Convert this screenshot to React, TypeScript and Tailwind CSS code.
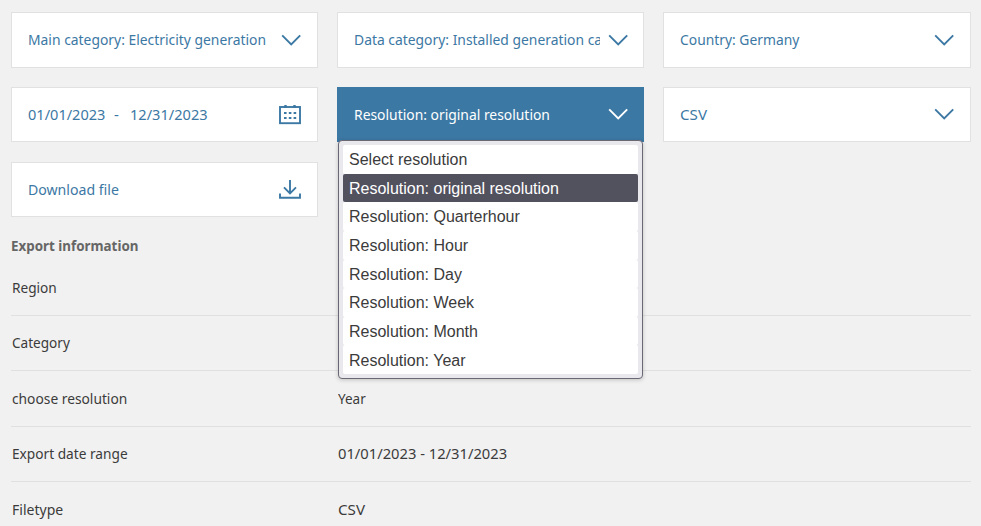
import React from "react";

const label = "inline-block origin-left whitespace-nowrap";

function Chevron({ className = "" }: { className?: string }) {
  return (
    <svg width="20" height="12" viewBox="0 0 20 12" fill="none" stroke="currentColor" strokeWidth="1.9" className={`shrink-0 ${className}`}>
      <path d="M1.2 1.3 10.2 10.3 19.2 1.3" />
    </svg>
  );
}

function Calendar() {
  return (
    <svg width="22" height="20" viewBox="0 0 22 20" className="shrink-0">
      <rect x="1" y="2" width="20" height="16.2" fill="none" stroke="currentColor" strokeWidth="1.9" />
      <path d="M6.5 0v3M15.5 0v3" stroke="currentColor" strokeWidth="2.4" />
      <path d="M5 8h2.6M9.8 8h2.6M14.6 8h2.6M5 13h2.6M9.8 13h2.6M14.6 13h2.6" stroke="currentColor" strokeWidth="2" />
    </svg>
  );
}

function Download() {
  return (
    <svg width="22" height="19" viewBox="0 0 22 19" fill="none" stroke="currentColor" strokeWidth="1.9" className="shrink-0">
      <path d="M11 0v13.2M5 7.4l6 6 6-6" />
      <path d="M1 13.5v4.2h20v-4.2" />
    </svg>
  );
}

function Card({ children, icon, active = false }: { children: React.ReactNode; icon: React.ReactNode; active?: boolean }) {
  return (
    <div
      className={
        active
          ? "flex items-center justify-between border border-[#3c78a4] bg-[#3c78a4] px-4 text-white"
          : "flex items-center justify-between border border-[#e1e1e1] bg-white px-4 text-[#3c78a4]"
      }
    >
      <div className="flex min-w-0 flex-1 pb-0.5">{children}</div>
      {icon}
    </div>
  );
}

const options = [
  "Select resolution",
  "Resolution: original resolution",
  "Resolution: Quarterhour",
  "Resolution: Hour",
  "Resolution: Day",
  "Resolution: Week",
  "Resolution: Month",
  "Resolution: Year",
];

function Menu() {
  return (
    <ul className="absolute left-[338px] top-[140px] h-[239px] w-[305px] rounded-[4px] border border-[#6b6875] bg-[#e9e9ed] p-1 font-['Liberation_Sans',Arial,sans-serif] text-[16px] text-[#3b3b3b] shadow-[0_1px_4px_rgba(0,0,0,0.2)]">
      {options.map((o, i) => (
        <li
          key={o}
          className={
            i === 1
              ? "flex h-[28.65px] items-center rounded-[2px] bg-[#52515e] px-1.5 pt-[1.45px] text-white"
              : "flex h-[28.65px] items-center rounded-[2px] bg-white px-1.5 pt-[1.45px]"
          }
        >
          {o}
        </li>
      ))}
    </ul>
  );
}

const rows = [
  { name: "Region", scale: "scale-x-[0.91]", value: "", valueScale: "", height: "h-[55px]" },
  { name: "Category", scale: "scale-x-[0.905]", value: "", valueScale: "", height: "h-[55px]" },
  { name: "choose resolution", scale: "scale-x-[0.918]", value: "Year", valueScale: "scale-x-[0.9]", height: "h-[56px]" },
  { name: "Export date range", scale: "scale-x-[0.912]", value: "01/01/2023 - 12/31/2023", valueScale: "scale-x-[0.982]", height: "h-[55px]" },
  { name: "Filetype", scale: "scale-x-[0.935]", value: "CSV", valueScale: "scale-x-[1.01]", height: "h-[56px]" },
];

export default function App() {
  return (
    <div className="relative h-[526px] w-[981px] overflow-hidden bg-[#f1f1f1] pl-[11px] pr-[10px] pt-3 font-['Noto_Sans',sans-serif] text-[15px] leading-5">
      <div className="grid h-14 grid-cols-[307px_307px_308px] gap-x-[19px]">
        <Card icon={<Chevron />}>
          <span className={`${label} scale-x-[0.925]`}>Main category: Electricity generation</span>
        </Card>
        <Card icon={<Chevron className="-mr-px" />}>
          <span className="flex w-[246px] shrink-0 overflow-hidden">
            <span className={`${label} scale-x-[0.925]`}>Data category: Installed generation ca</span>
          </span>
        </Card>
        <Card icon={<Chevron />}>
          <span className={`${label} scale-x-[0.923]`}>Country: Germany</span>
        </Card>
      </div>
      <div className="mt-[19px] grid h-[55px] grid-cols-[307px_307px_308px] gap-x-[19px]">
        <Card icon={<Calendar />}>
          <span className={`${label} w-[86px] scale-x-[0.97]`}>01/01/2023</span>
          <span className="w-[16px]">-</span>
          <span className={`${label} scale-x-[0.972]`}>12/31/2023</span>
        </Card>
        <Card icon={<Chevron className="-mr-px mb-px" />} active>
          <span className={`${label} scale-x-[0.925]`}>Resolution: original resolution</span>
        </Card>
        <Card icon={<Chevron className="mb-px" />}>
          <span className={`${label} scale-x-[1.01]`}>CSV</span>
        </Card>
      </div>
      <div className="mt-5 grid h-[55px] grid-cols-[307px]">
        <Card icon={<Download />}>
          <span className={`${label} scale-x-[0.94]`}>Download file</span>
        </Card>
      </div>
      <h2 className="mt-[18px] h-[26px] font-bold text-[#666]">
        <span className={`${label} scale-x-[0.892]`}>Export information</span>
      </h2>
      <div className="text-[#3b3b3b]">
        {rows.map((r) => (
          <div key={r.name} className={`${r.height} grid grid-cols-[326px_1fr] items-center border-b border-[#e0e0e0] pb-0.5 pl-px`}>
            <span className={`${label} ${r.scale}`}>{r.name}</span>
            <span className={`${label} ${r.valueScale}`}>{r.value}</span>
          </div>
        ))}
      </div>
      <Menu />
    </div>
  );
}
